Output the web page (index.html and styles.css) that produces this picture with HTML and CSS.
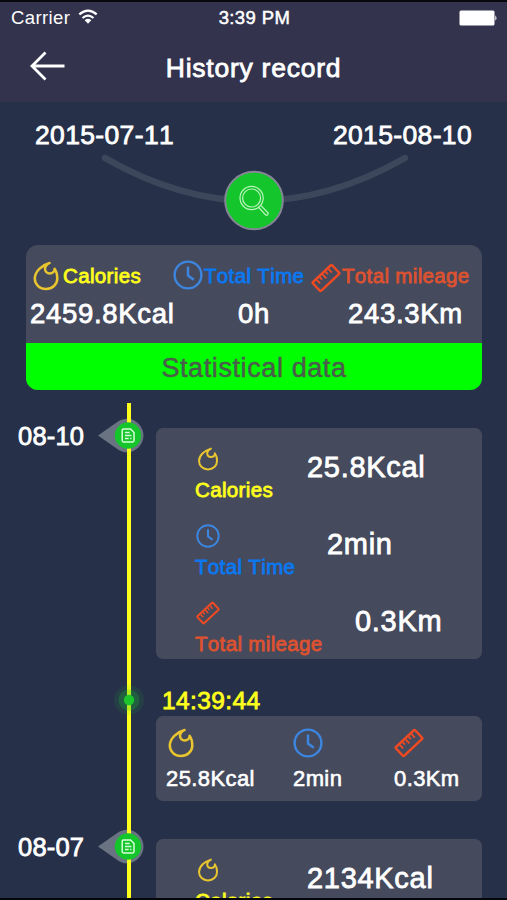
FILE: index.html
```
<!DOCTYPE html>
<html lang="en">
<head>
<meta charset="utf-8">
<title>History record</title>
<link rel="stylesheet" href="styles.css">
</head>
<body>
<svg class="defs" aria-hidden="true">
  <symbol id="fire" viewBox="0 0 30 30">
    <path d="M18.6 2C11 4 3.8 10.2 3.8 17.6C3.8 23.6 8.8 28 15 28S26.3 23.6 26.3 17.4C26.3 13.6 25.3 10.3 23.6 7.8C23.6 10.6 21.6 12.4 18.8 12.4C16 12.4 14 10.4 14 7.8C14 5.2 16 3.4 18.6 2Z" fill="none" stroke="currentColor" stroke-width="2.5" stroke-linejoin="round"/>
  </symbol>
  <symbol id="clock" viewBox="0 0 30 30">
    <circle cx="15" cy="15" r="13.4" fill="none" stroke="currentColor" stroke-width="2.4"/>
    <path d="M15 6.5V15.5L20.8 19.8" fill="none" stroke="currentColor" stroke-width="2.5"/>
  </symbol>
  <symbol id="ruler" viewBox="0 0 30 30">
    <g transform="rotate(-43 15 15)" fill="none" stroke="currentColor" stroke-width="2.5">
      <rect x="1.8" y="9" width="26.4" height="12" rx="1.2"/>
      <path d="M7 10V15M11 10V13.5M15 10V15.5M19 10V13.5M23 10V15" stroke-width="1.8"/>
    </g>
  </symbol>
  <symbol id="marker" viewBox="0 0 46 36">
    <path d="M0 17.5L20 3.6C32 -4.5 45.5 5.5 45.5 17.5S32 39.5 20 31.4Z" fill="#697382"/>
    <path d="M29 0H33V36H29Z" fill="#ffff1c"/>
    <circle cx="30" cy="17.5" r="13.2" fill="#14c52b"/>
    <path d="M24.2 12.4Q24.2 11 25.5 11H32.5L36 14.5V22.6Q36 24 34.7 24H25.5Q24.2 24 24.2 22.6ZM26.9 14.6H31.7M26.9 17.5H33.5M26.9 20.6H30.7M32.1 20.6H33.5" fill="none" stroke="#d7ffd9" stroke-width="1.5"/>
  </symbol>
</svg>
<main class="screen">
  <header class="header">
    <div class="status">
      <div class="carrier">Carrier
        <svg class="wifi" viewBox="0 0 20 16"><path d="M1.3 5.4Q10-2.3 18.7 5.4M4.5 9Q10 4.2 15.5 9" fill="none" stroke="currentColor" stroke-width="2.2"/><path d="M6.7 11.2Q10 8.5 13.3 11.2L10 14.8Z" fill="currentColor"/></svg>
      </div>
      <div class="clock-text">3:39 PM</div>
      <div class="battery"><svg viewBox="0 0 39 16"><rect x=".5" y=".5" width="35" height="15" rx="1.5" fill="#fff"/><path d="M36.3 5.2Q38.7 8 36.3 10.8Z" fill="#fff"/></svg></div>
    </div>
    <div class="navbar">
      <svg class="back" viewBox="0 0 36 32"><path d="M15.5 2.5L2 16L15.5 29.5M2.5 16H34.5" fill="none" stroke="#fff" stroke-width="2.8"/></svg>
      <h1>History record</h1>
      <span></span>
    </div>
  </header>

  <section class="range">
    <div class="dates"><span>2015-07-11</span><span>2015-08-10</span></div>
    <svg class="arc" viewBox="0 0 310 80">
      <path d="M6 6Q155 92 306 6" fill="none" stroke="#3d475c" stroke-width="6.5" stroke-linecap="round"/>
      <circle cx="155" cy="48.5" r="28.8" fill="#14c52b" stroke="#858796" stroke-width="2"/>
      <g fill="none" stroke="#bdf5bf" stroke-width="1.2"><circle cx="152.6" cy="46" r="11.6"/><circle cx="152.6" cy="46" r="9"/><path d="M159.8 55.5L166.6 62.9Q169 63.9 169.2 61L162 53.7"/></g>
    </svg>
  </section>

  <section class="summary">
    <div class="stats">
      <div class="stat">
        <div class="head yellow"><svg class="icon gold"><use href="#fire"/></svg>Calories</div>
        <div class="total">2459.8Kcal</div>
      </div>
      <div class="stat time">
        <div class="head blue"><svg class="icon sky"><use href="#clock"/></svg>Total Time</div>
        <div class="total">0h</div>
      </div>
      <div class="stat miles">
        <div class="head orange"><svg class="icon red"><use href="#ruler"/></svg>Total mileage</div>
        <div class="total">243.3Km</div>
      </div>
    </div>
    <div class="button">Statistical data</div>
  </section>

  <section class="timeline">
    <div class="day">
      <div class="date">08-10</div>
      <svg class="marker"><use href="#marker"/></svg>
      <div class="card">
        <div class="row"><div class="kind yellow"><svg class="gold"><use href="#fire"/></svg>Calories</div><div class="amount kcal">25.8Kcal</div></div>
        <div class="row"><div class="kind blue"><svg class="sky"><use href="#clock"/></svg>Total Time</div><div class="amount min">2min</div></div>
        <div class="row"><div class="kind orange"><svg class="red"><use href="#ruler"/></svg>Total mileage</div><div class="amount km">0.3Km</div></div>
      </div>
    </div>
    <div class="entry">
      <svg class="dot" viewBox="0 0 32 32"><circle cx="16" cy="16" r="15" fill="#14c52b" opacity=".1"/><circle cx="16" cy="16" r="10.5" fill="#14c52b" opacity=".25"/><circle cx="16" cy="16" r="5.2" fill="#1bc52b"/></svg>
      <div class="detail">
        <div class="timestamp">14:39:44</div>
        <div class="mini">
          <div class="cell"><svg class="gold"><use href="#fire"/></svg>25.8Kcal</div>
          <div class="cell"><svg class="sky"><use href="#clock"/></svg>2min</div>
          <div class="cell"><svg class="red"><use href="#ruler"/></svg>0.3Km</div>
        </div>
      </div>
    </div>
    <div class="day">
      <div class="date">08-07</div>
      <svg class="marker"><use href="#marker"/></svg>
      <div class="card">
        <div class="row"><div class="kind yellow"><svg class="gold"><use href="#fire"/></svg>Calories</div><div class="amount kcal">2134Kcal</div></div>
      </div>
    </div>
  </section>
</main>
</body>
</html>
```
FILE: styles.css
```
* { box-sizing: border-box; }
body {
  margin: 0;
  background: #000;
  color: #fff;
  font-family: "Liberation Sans", Arial, sans-serif;
  font-kerning: none;
  white-space: nowrap;
  -webkit-text-stroke: 0.8px currentColor;
}
svg { display: block; flex: none; -webkit-text-stroke: 0; }
.defs { position: absolute; width: 0; height: 0; }
.screen {
  height: 900px;
  overflow: hidden;
  background: #263049;
  border-top: 2px solid #08080e;
  border-bottom: 2px solid #05060a;
}
.yellow { color: #ffff1c; }
.blue { color: #0b78f0; }
.orange { color: #dc5230; }
.gold { color: #e9c52f; }
.sky { color: #3d86e0; }
.red { color: #f04a22; }

.header { height: 100px; background: #33334d; }
.status {
  display: grid;
  grid-template-columns: 1fr auto 1fr;
  align-items: center;
  height: 32px;
  padding: 0 9px 0 11px;
  font-size: 18.5px;
  letter-spacing: 0.4px;
  -webkit-text-stroke-width: 0.5px;
}
.carrier { display: flex; gap: 8px; align-items: center; -webkit-text-stroke: 0; }
.wifi { width: 20px; height: 16px; margin-top: -2px; }
.battery { justify-self: end; }
.battery svg { width: 39px; height: 16px; }
.navbar {
  display: grid;
  grid-template-columns: 1fr auto 1fr;
  height: 68px;
  padding: 0 30px;
}
.back { width: 36px; height: 32px; margin-top: 16px; }
.navbar h1 {
  margin: 0;
  font-size: 26.5px;
  font-weight: 400;
  letter-spacing: 0.75px;
  line-height: 68px;
}

.range { height: 143px; }
.dates {
  display: flex;
  justify-content: space-between;
  padding: 13px 35px 0 35px;
  font-size: 26.5px;
  letter-spacing: 0.35px;
  line-height: 40px;
}
.arc { width: 310px; height: 80px; margin: -3px 0 0 99px; }

.summary {
  height: 145px;
  margin: 0 25px 0 26px;
  border-radius: 12px;
  background: #454a5d;
  overflow: hidden;
}
.stats { display: flex; height: 98px; padding-top: 15px; }
.stat { width: 147px; padding-left: 5px; }
.stat.time { width: 138px; padding-left: 0; }
.stat.miles { width: 171px; padding-left: 0; }
.head {
  display: flex;
  align-items: center;
  gap: 1px;
  height: 32px;
  font-size: 20.5px;
  letter-spacing: 0.35px;
}
.stat:first-child .head { gap: 2px; }
.icon { width: 30px; height: 30px; }
.time .icon { margin-top: -2px; }
.miles .icon { margin-top: 3px; }
.total {
  height: 44px;
  margin-left: -1px;
  font-size: 27.5px;
  letter-spacing: 0.7px;
  line-height: 44px;
}
.time .total { padding-left: 66px; }
.miles .total { padding-left: 38px; }
.button {
  height: 47px;
  background: #00ff00;
  color: #4b5d4b;
  font-size: 27px;
  letter-spacing: 0.6px;
  line-height: 50px;
  text-align: center;
  -webkit-text-stroke-width: 0.5px;
}

.timeline {
  height: 495px;
  margin-top: 13px;
  padding-top: 25px;
  overflow: hidden;
  background: linear-gradient(#ffff1c, #ffff1c) 127px 0 / 4px 100% no-repeat;
}
.day { display: flex; height: 255px; }
.date {
  width: 98px;
  padding-left: 18px;
  font-size: 25.5px;
  letter-spacing: 0.2px;
  line-height: 16px;
}
.marker { width: 46px; height: 36px; margin: -10px 12px 0 0; }
.card {
  width: 326px;
  height: 231px;
  border-radius: 7px;
  background: #454a5d;
}
.row { display: flex; height: 77px; }
.kind {
  width: 151px;
  padding: 18px 0 0 39px;
  font-size: 20.5px;
  letter-spacing: 0.35px;
  line-height: 36px;
}
.kind svg { width: 26px; height: 26px; margin: 0 0 0 -0.5px; padding: 1px; }
.amount { font-size: 29px; letter-spacing: 0.7px; line-height: 79px; }
.amount.min { padding-left: 20px; }
.amount.km { padding-left: 48px; }

.entry { display: flex; height: 156px; }
.dot { width: 32px; height: 32px; margin: 1px 11px 0 113px; }
.timestamp {
  height: 33px;
  padding-left: 6px;
  color: #ffff1c;
  font-size: 24.5px;
  letter-spacing: 0.4px;
  line-height: 35px;
}
.mini {
  display: grid;
  grid-template-columns: 127px 101px 1fr;
  width: 326px;
  height: 85px;
  padding: 12px 0 0 10px;
  border-radius: 7px;
  background: #454a5d;
}
.cell { font-size: 22px; letter-spacing: 0.4px; line-height: 41px; -webkit-text-stroke-width: 0.6px; }
.cell svg { width: 30px; height: 30px; }
```
